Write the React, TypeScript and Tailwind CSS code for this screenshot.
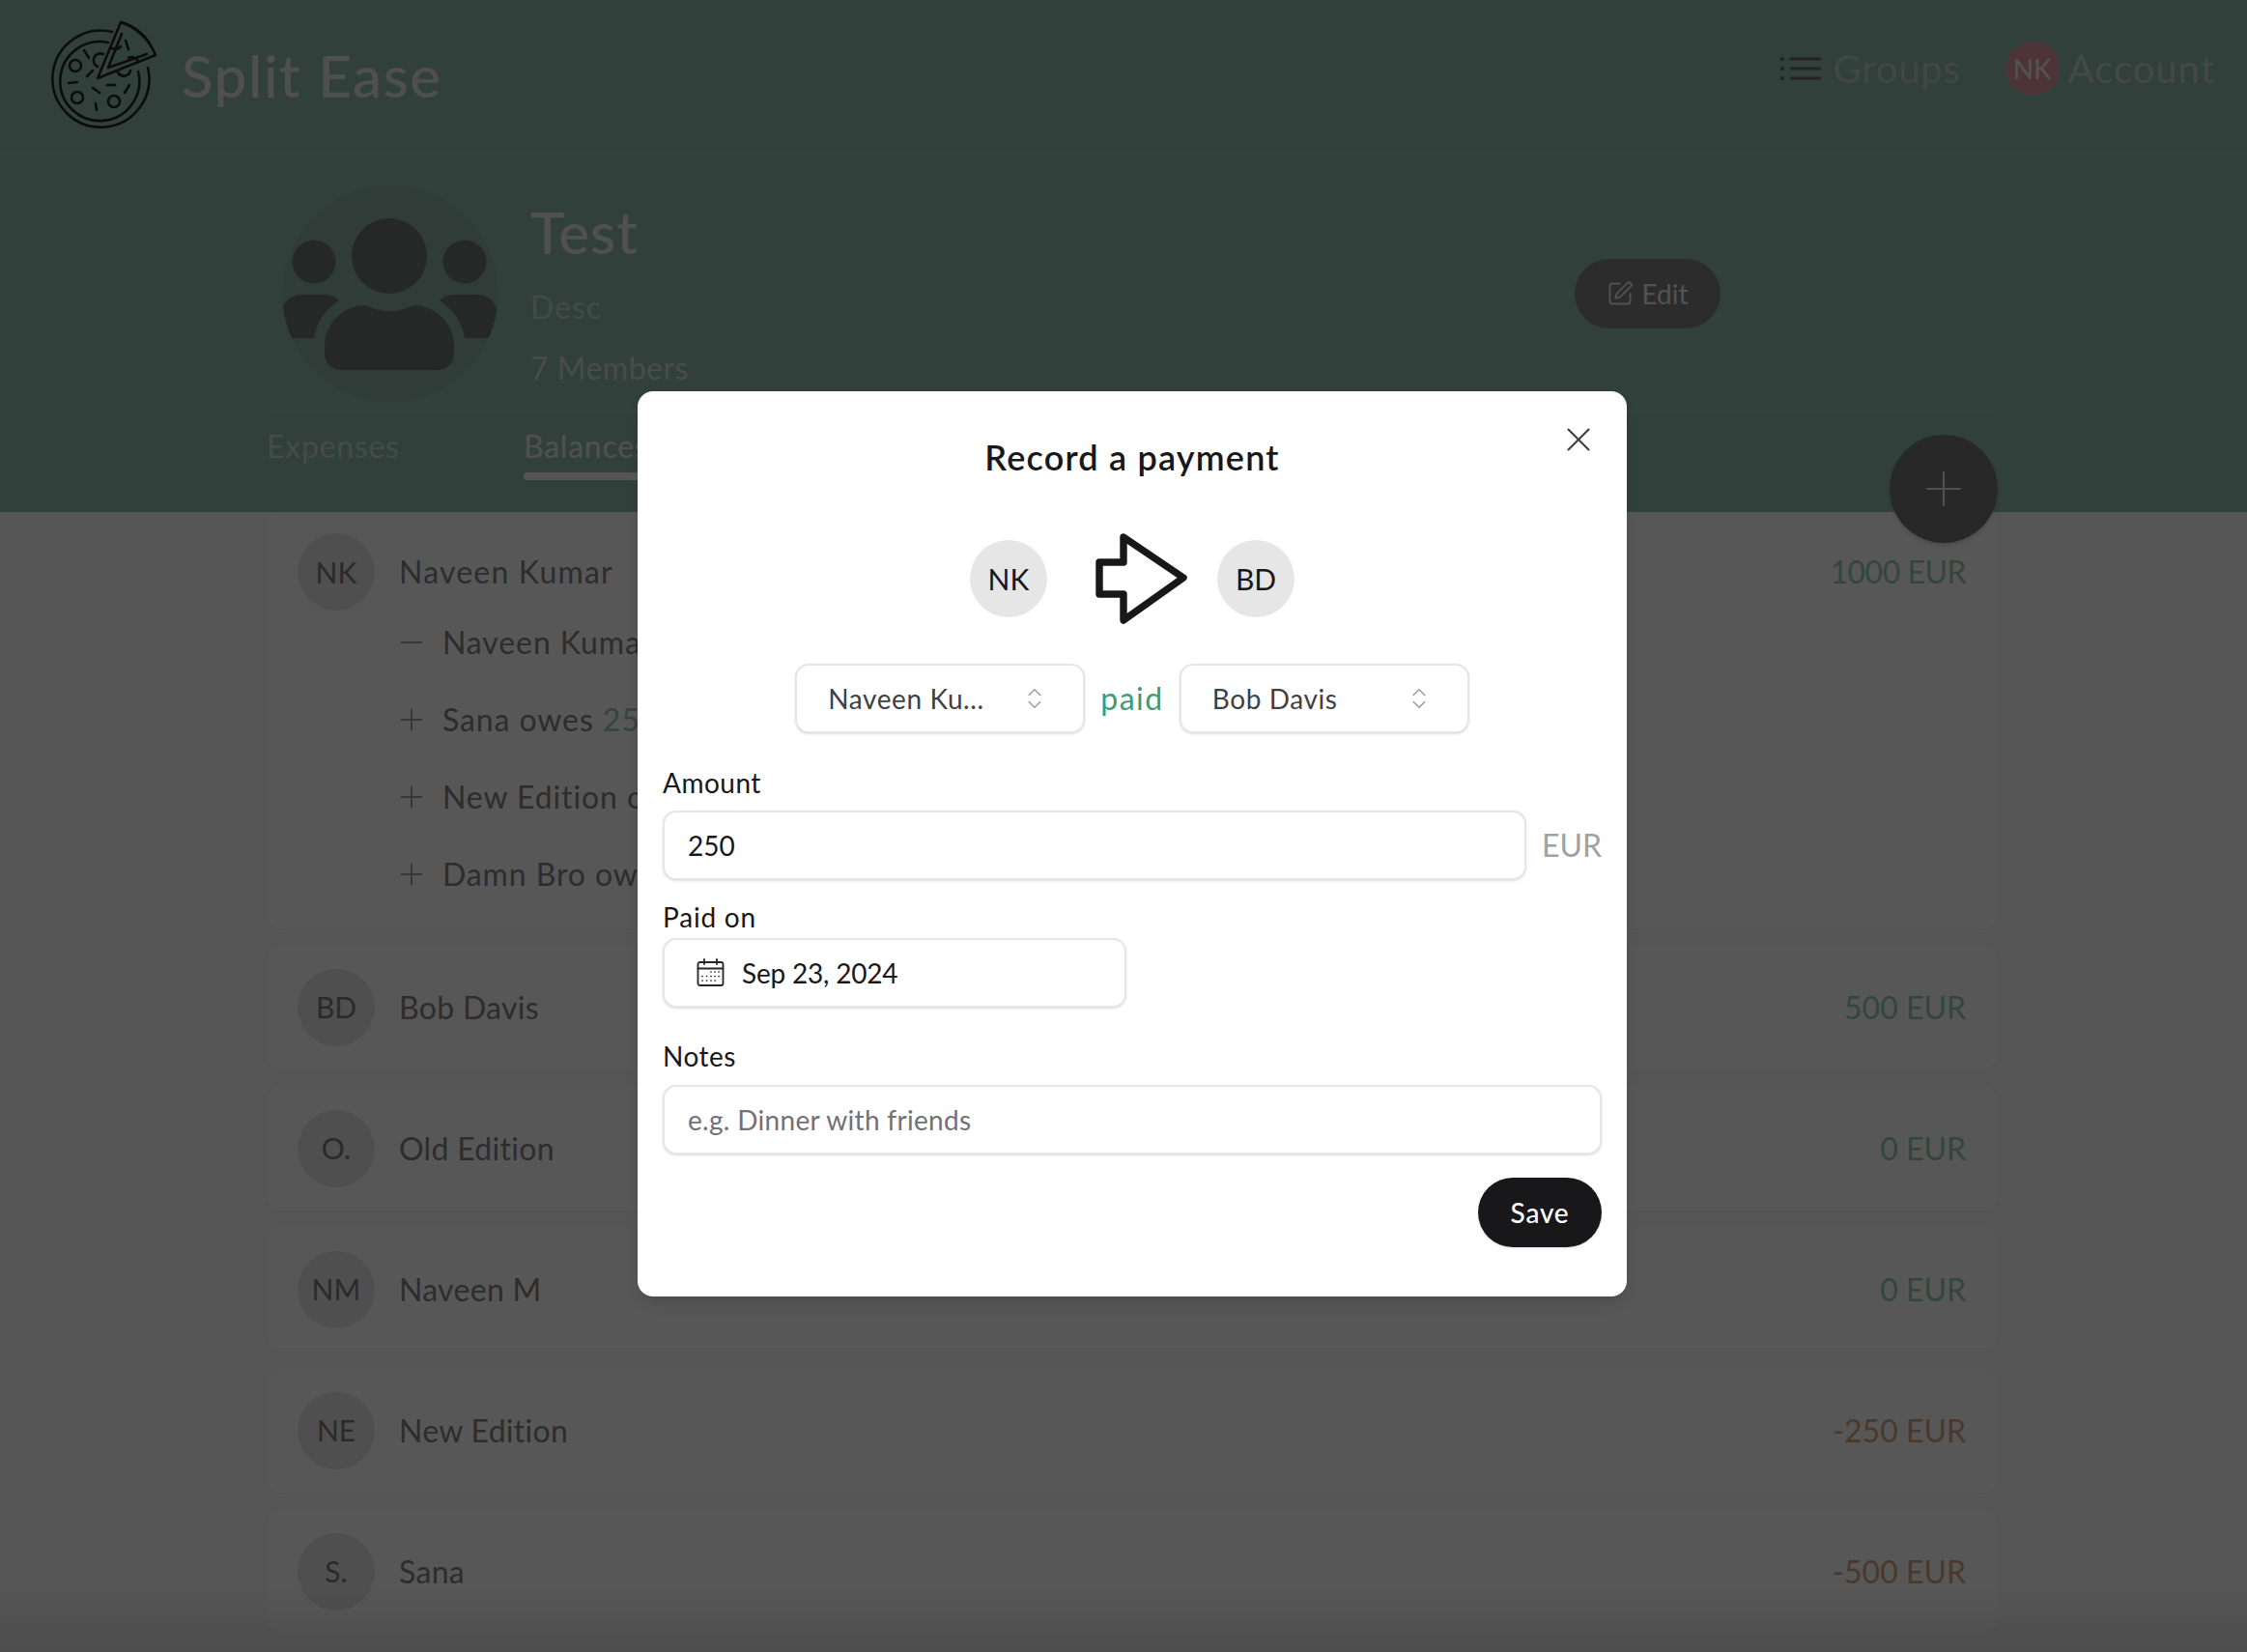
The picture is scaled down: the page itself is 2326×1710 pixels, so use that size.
import { ChevronsUpDown, Minus, Plus, SquarePen, X } from "lucide-react";

type Member = { initials: string; name: string; amount: string; owes: boolean };

const members: Member[] = [
  { initials: "BD", name: "Bob Davis", amount: "500 EUR", owes: false },
  { initials: "O.", name: "Old Edition", amount: "0 EUR", owes: false },
  { initials: "NM", name: "Naveen M", amount: "0 EUR", owes: false },
  { initials: "NE", name: "New Edition", amount: "-250 EUR", owes: true },
  { initials: "S.", name: "Sana", amount: "-500 EUR", owes: true },
];

const debts = [
  { minus: true, who: "Naveen Kumar owes", value: "250 EUR" },
  { minus: false, who: "Sana owes", value: "250 EUR" },
  { minus: false, who: "New Edition owes", value: "250 EUR" },
  { minus: false, who: "Damn Bro owes", value: "250 EUR" },
];

function PizzaLogo() {
  return (
    <svg width="130" height="130" viewBox="0 0 130 130" fill="none" stroke="#212322" strokeWidth="2.6" strokeLinecap="round" strokeLinejoin="round">
      <path d="M78 19A50 50 0 1 0 115 56" />
      <path d="M74 30A41 41 0 1 0 105 60" />
      <path d="M63 67L87 9A58 58 0 0 1 123 43Z" />
      <path d="M74 56L88 21M74 56L114 42" />
      <path d="M88 9A52 52 0 0 1 117 31" />
      <circle cx="40" cy="54" r="6" />
      <circle cx="42" cy="87" r="6" />
      <circle cx="80" cy="91" r="6" />
      <path d="M69 42A7 7 0 0 0 63 55" />
      <path d="M78 36A7 7 0 0 0 87 34" />
      <path d="M95 46A7 7 0 0 1 105 50" />
      <path d="M84 61A7 7 0 0 0 97 59" />
      <path d="M49 38L54 46M52 65L58 59M33 72L42 71M58 77L65 82M73 74L81 74M91 82L96 74M61 93L62 100M92 28L95 37" />
    </svg>
  );
}

function GroupGlyph() {
  return (
    <svg width="250" height="210" viewBox="0 0 250 210" fill="#707673">
      <circle cx="124" cy="54" r="39" />
      <circle cx="46" cy="60" r="22.5" />
      <circle cx="202" cy="60" r="22.5" />
      <path d="M100 105C116 113 132 113 149 105C172 105 191 124 191 147V156C191 165 183 172 174 172H74C65 172 57 165 57 156V147C57 124 76 105 100 105Z" />
      <path d="M13 110C14 101 23 94 33 94H58C63 94 68 96 72 100C58 109 49 122 46 139H21C17 130 14 120 13 110Z" />
      <path d="M235 110C234 101 225 94 215 94H190C185 94 180 96 176 100C190 109 199 122 202 139H227C231 130 234 120 235 110Z" />
    </svg>
  );
}

function ListGlyph() {
  return (
    <svg width="42" height="24" viewBox="0 0 42 24" fill="none" stroke="#676767" strokeWidth="3" strokeLinecap="round">
      <path d="M11 2H41M11 12H41M11 22H41" />
      <path d="M1.5 2H2M1.5 12H2M1.5 22H2" strokeWidth="4" />
    </svg>
  );
}

function TransferArrow() {
  return (
    <svg width="130" height="120" viewBox="0 0 130 120" fill="none" stroke="#18181b" strokeWidth="7.4" strokeLinejoin="round" strokeLinecap="round">
      <path d="M28 42H53V16L115 58L53 102V75H28Z" />
    </svg>
  );
}

function CalendarGlyph() {
  return (
    <svg width="30" height="30" viewBox="0 0 30 30" fill="none" stroke="#27272a" strokeWidth="1.8" strokeLinecap="round" strokeLinejoin="round">
      <rect x="1.5" y="4" width="26" height="24" rx="2" />
      <path d="M1.5 10.5H27.5M8 1V6M21 1V6" />
      <path
        d="M15 14H15.1M19 14H19.1M23 14H23.1M6 18.5H6.1M10.5 18.5H10.6M15 18.5H15.1M19 18.5H19.1M23 18.5H23.1M6 23H6.1M10.5 23H10.6M15 23H15.1M19 23H19.1"
        strokeWidth="1.7"
      />
    </svg>
  );
}

function SelectBox({ label }: { label: string }) {
  return (
    <button className="flex h-[72px] w-[300px] items-center justify-between rounded-[14px] border-2 border-[#e6e6e6] bg-white pl-[32px] pr-[36px] text-[28px] tracking-[0.6px] text-[#3f3f46] shadow-sm">
      <span>{label}</span>
      <ChevronsUpDown size={28} strokeWidth={1.2} color="#9a9a9a" />
    </button>
  );
}

function MemberAvatar({ initials }: { initials: string }) {
  return (
    <div className="flex h-20 w-20 shrink-0 items-center justify-center rounded-full bg-[#e6e6e6] text-[30px] text-[#7d7d7d]">
      {initials}
    </div>
  );
}

function Modal() {
  return (
    <div className="absolute left-[660px] top-[405px] flex h-[937px] w-[1024px] flex-col rounded-[16px] bg-white px-[26px] text-[#18181b] shadow-lg">
      <button className="absolute right-[29px] top-[29px] text-[#3f3f46]">
        <X size={42} strokeWidth={1.2} />
      </button>
      <h2 className="mt-[45px] text-center text-[36px] font-semibold leading-[46px] tracking-[1.2px]">Record a payment</h2>

      <div className="mt-[55px] flex h-[96px] items-center justify-center">
        <div className="flex h-20 w-20 items-center justify-center rounded-full bg-[#e6e6e6] text-[30px]">NK</div>
        <div className="ml-[26px] mr-[20px] -my-[12px] pt-[1px]">
          <TransferArrow />
        </div>
        <div className="flex h-20 w-20 items-center justify-center rounded-full bg-[#e6e6e6] text-[30px]">BD</div>
      </div>

      <div className="mt-[40px] flex items-center justify-center gap-[16px]">
        <SelectBox label="Naveen Ku..." />
        <span className="text-[32px] tracking-[1.5px] text-[#3f9a78]">paid</span>
        <SelectBox label="Bob Davis" />
      </div>

      <label className="mt-[33px] text-[28px] leading-[36px] tracking-[0.5px]">Amount</label>
      <div className="mt-[11px] flex items-center gap-[16px]">
        <input
          readOnly
          value="250"
          className="h-[72px] w-[894px] rounded-[14px] border-2 border-[#e6e6e6] bg-white px-[24px] text-[28px] shadow-sm outline-none"
        />
        <span className="text-[32px] text-[#a1a1a1]">EUR</span>
      </div>

      <label className="mt-[20px] text-[28px] leading-[36px] tracking-[0.8px]">Paid on</label>
      <button className="mt-[4px] flex h-[72px] w-[480px] items-center gap-[17px] rounded-[14px] border-2 border-[#e6e6e6] bg-white pl-[33px] text-[28px] tracking-[-0.2px] shadow-sm">
        <CalendarGlyph />
        <span>Sep 23, 2024</span>
      </button>

      <label className="mt-[32px] text-[28px] leading-[36px] tracking-[0.5px]">Notes</label>
      <input
        readOnly
        placeholder="e.g. Dinner with friends"
        className="mt-[12px] h-[72px] w-full rounded-[14px] border-2 border-[#e6e6e6] bg-white px-[24px] text-[28px] tracking-[0.3px] shadow-sm outline-none placeholder:text-[#71717a]"
      />

      <div className="mt-[24px] flex justify-end">
        <button className="h-[72px] w-[128px] rounded-full bg-[#18181b] text-[28px] font-medium tracking-[0.8px] text-white shadow-sm">Save</button>
      </div>
    </div>
  );
}

export default function App() {
  return (
    <div className="relative h-[1710px] w-[2326px] overflow-hidden bg-[#fafafa] [font-family:Lato,sans-serif]">
      <div className="relative h-[530px] bg-[#90bcae]">
        <header className="flex h-[160px] items-center justify-between border-b-2 border-[#9ac3b6] pl-[38px] pr-[33px]">
          <div className="flex items-center gap-[20px]">
            <PizzaLogo />
            <span className="mb-[2px] text-[60px] font-medium tracking-[1.6px] text-[#e6e6e6]">Split Ease</span>
          </div>
          <nav className="mb-[16px] flex items-center">
            <ListGlyph />
            <span className="ml-[12px] text-[40px] tracking-[0.8px] text-[#bfd0ca]">Groups</span>
            <div className="ml-[46px] flex h-14 w-14 items-center justify-center rounded-full bg-[#e2999f] text-[28px] text-[#f4f4f4]">NK</div>
            <span className="ml-[9px] text-[40px] tracking-[1px] text-[#c8d3d0]">Account</span>
          </nav>
        </header>

        <div className="ml-[276px] w-[1792px]">
          <div className="flex h-[266px] items-start border-b-2 border-[#9ac3b6] pl-[16px] pt-[32px]">
            <div className="flex h-56 w-56 items-center justify-center overflow-hidden rounded-full bg-[#8ab0a5]">
              <div className="mt-[24px] shrink-0">
                <GroupGlyph />
              </div>
            </div>
            <div className="ml-[33px] flex w-[1081px] flex-col">
              <span className="mt-[8px] text-[60px] font-medium leading-[80px] tracking-[1px] text-[#ebebeb]">Test</span>
              <span className="mt-[16px] text-[32px] leading-[44px] tracking-[1px] text-[#c4d8d2]">Desc</span>
              <span className="mt-[19px] text-[32px] leading-[44px] tracking-[0.5px] text-[#d8dddb]">7 Members</span>
            </div>
            <button className="mt-[76px] flex h-[72px] w-[151px] items-center justify-center gap-[8px] rounded-full bg-[#828282] text-[28px] text-[#f0f0f0]">
              <SquarePen size={28} strokeWidth={1.6} />
              Edit
            </button>
          </div>

          <div className="flex pt-[14px] text-[32px] tracking-[0.75px]">
            <span className="h-[44px] w-[266px] leading-[44px] text-[#cdd9d5]">Expenses</span>
            <div className="flex flex-col">
              <span className="leading-[44px] text-[#ebebeb]">Balances</span>
              <div className="mt-[5px] h-[8px] w-[150px] rounded-full bg-[#fafafa]" />
            </div>
          </div>
        </div>

        <button className="absolute left-[1956px] top-[450px] flex h-28 w-28 items-center justify-center rounded-full bg-[#757575] text-[#ebebeb] shadow-md">
          <Plus size={58} strokeWidth={0.9} />
        </button>
      </div>

      <div className="-mt-[2px] ml-[276px] flex w-[1792px] flex-col gap-[17px]">
        <div className="rounded-[16px] bg-white pb-[16px] pl-[32px] pr-[33px] pt-[24px] shadow-[0_1px_2px_rgba(0,0,0,0.04)]">
          <div className="flex items-center">
            <MemberAvatar initials="NK" />
            <span className="ml-[25px] text-[32px] tracking-[1.2px] text-[#848484]">Naveen Kumar</span>
            <span className="ml-auto text-[32px] tracking-[-0.5px] text-[#93cdb6]">1000 EUR</span>
          </div>
          <div className="-mt-[7px] ml-[100px] flex flex-col">
            {debts.map((debt) => (
              <div key={debt.who} className="flex h-20 items-center gap-[14px] text-[32px] tracking-[0.9px] text-[#848484]">
                {debt.minus ? <Minus size={36} strokeWidth={1} /> : <Plus size={36} strokeWidth={1} />}
                <span>
                  {debt.who} <span className="text-[#93cdb6]">{debt.value}</span>
                </span>
              </div>
            ))}
          </div>
        </div>

        {members.map((member) => (
          <div key={member.initials} className="flex h-[129px] items-center rounded-[16px] bg-white pl-[32px] pr-[33px] shadow-[0_1px_2px_rgba(0,0,0,0.04)]">
            <MemberAvatar initials={member.initials} />
            <span className="ml-[25px] text-[32px] tracking-[0.3px] text-[#848484]">{member.name}</span>
            <span className={member.owes ? "ml-auto text-[32px] text-[#d9a47d]" : "ml-auto text-[32px] text-[#93cdb6]"}>{member.amount}</span>
          </div>
        ))}
      </div>

      <div className="absolute bottom-0 left-0 h-[70px] w-full bg-gradient-to-b from-transparent to-black/10" />

      <div className="absolute inset-0 bg-black/[.66]" />
      <Modal />
    </div>
  );
}
